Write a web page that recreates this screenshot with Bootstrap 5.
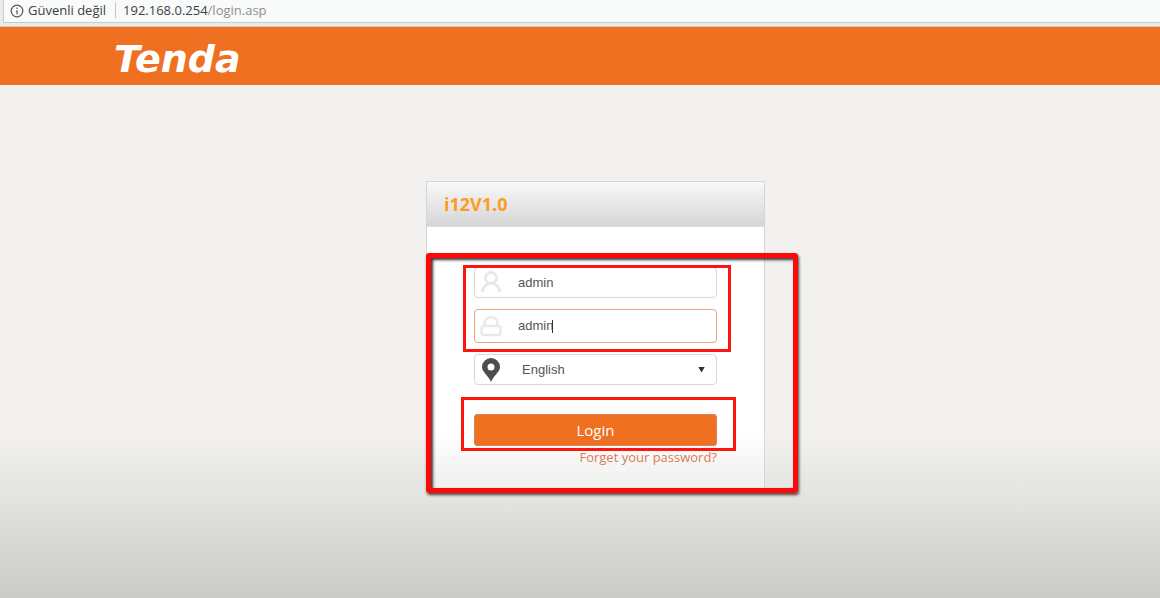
<!DOCTYPE html>
<html lang="en">
<head>
<meta charset="utf-8">
<meta name="viewport" content="width=device-width, initial-scale=1">
<title>Tenda login</title>
<link href="https://cdn.jsdelivr.net/npm/bootstrap@5.3.0/dist/css/bootstrap.min.css" rel="stylesheet">
<style>
  body { font-family: "Open Sans", "Noto Sans", sans-serif; background: #f2f1f0 linear-gradient(#f2f1f0 0, #f2f1f0 73%, #e2e2e0 84%, #cacac9 100%) no-repeat; }
  .address { height: 27px; background: #e9eaec; border-bottom: 1px solid #d9c8bd; padding-left: 3px; font-size: 13px; line-height: 20px; }
  .omnibox { height: 23px; background: #f9fafa; border: solid #c9cacc; border-width: 0 0 1px 1px; padding-left: 6px; color: #3e4144; }
  .divider { width: 1px; height: 16px; background: #c4c4c4; margin: 2px 7px 0 9px; }
  .path { color: #8d8d8d; }
  .brandbar { background: #f07022; height: 58px; padding-left: 114px; }
  .logo { font: italic bold 38px/64px "DejaVu Sans", sans-serif; color: #fff; text-decoration: none; }
  .logo:hover { color: #fff; }
  main { padding: 96px 0 0 31px; }
  .login-box { width: 339px; border: 1px solid #d6d6d6; border-bottom: 0; background: linear-gradient(#fff 80%, #efefee); }
  .title { height: 45px; background: linear-gradient(#f8f8f7, #d5d6d6); border-bottom: 1px solid #dfdfdf; padding-left: 17px; font-size: 18px; line-height: 44px; font-weight: 700; color: #fb9c26; }
  .login-form { padding: 40px 47px 24px; }
  .fields { display: grid; gap: 11px; margin-bottom: 11px; }
  .field { height: 31px; border: 1px solid #d8d8da; border-radius: 4px; background: #fff; }
  .field.active { height: 34px; border-color: #e9a57c; }
  .field svg { flex: none; margin-left: 4px; }
  .field input, .field select { font: 13px/20px "Liberation Sans", Arial, sans-serif; color: #555; border: 0; background: none; outline: 0; min-width: 0; padding: 0; }
  .field input { margin-left: 15px; }
  .field select { margin: 0 11px 0 19px; appearance: none; }
  .arrow { position: absolute; right: 11px; width: 7px; height: 6px; background: #333; clip-path: polygon(0 0, 100% 0, 50% 100%); pointer-events: none; }
  .caret { position: absolute; left: 77px; width: 1px; height: 13px; background: #333; }
  .submit { margin-top: 29px; }
  .btn-login { height: 32px; background: #f07022; border: 1px solid #dc8450; border-radius: 3px; color: #fff; font-size: 15px; line-height: 20px; padding: 0; }
  .btn-login:hover { background: #e4661a; color: #fff; }
  .forgot { font-size: 13px; color: #dc7951; text-decoration: none; }
  .forgot-row { line-height: 20px; }
  .outline { position: absolute; border: 3px solid #fb1410; pointer-events: none; }
  .outline-fields { inset: -2px -14px -9px -11px; }
  .outline-login { inset: -17px -19px -5px -13px; }
  .outline-form { inset: 71px -34px -2px -1px; border-width: 5px; border-color: #ff0808; border-radius: 3px; box-shadow: 1px 2px 3px #444, inset 2px 2px 3px #333; }
</style>
</head>
<body class="min-vh-100">
<div class="address">
  <div class="omnibox d-flex">
    <svg class="mt-1 me-1" width="14" height="14" viewBox="0 0 14 14" fill="none" stroke="#555" stroke-width="1.2" aria-hidden="true"><circle cx="7" cy="7" r="5.8"/><path d="M7 6v4.2M7 3.6v1.3"/></svg>
    <span>Güvenli değil</span><span class="divider"></span><span>192.168.0.254<span class="path">/login.asp</span></span>
  </div>
</div>
<header class="brandbar"><a class="logo d-inline-block" href="#">Tenda</a></header>
<main class="d-flex justify-content-center">
  <section class="login-box position-relative">
    <h1 class="title m-0">i12V1.0</h1>
    <form class="login-form">
      <div class="fields position-relative">
        <div class="field d-flex align-items-center">
          <svg width="24" height="24" viewBox="0 0 24 24" fill="none" stroke="#e8e8ec" stroke-width="3" aria-hidden="true"><circle cx="12" cy="7" r="5.5"/><path d="M3.500 21c0-5 3-7 6-8.500M20.500 21c0-5-3-7-6-8.500"/></svg>
          <input class="flex-fill" type="text" value="admin" aria-label="Username">
        </div>
        <div class="field active d-flex align-items-center position-relative">
          <svg width="24" height="24" viewBox="0 0 24 24" fill="none" stroke="#ebe8e8" stroke-width="2.500" aria-hidden="true"><path d="M5.500 12V9.500a6.500 6.500 0 0 1 13 0V12"/><rect x="2.500" y="12" width="19" height="9" rx="2"/></svg>
          <input class="flex-fill" type="text" value="admin" aria-label="Password">
          <span class="caret"></span>
        </div>
        <div class="outline outline-fields"></div>
      </div>
      <div class="field position-relative d-flex align-items-center">
        <svg width="24" height="26" viewBox="0 0 24 26" aria-hidden="true"><path fill="#4d4d4f" fill-rule="evenodd" d="M12 1a9 9 0 0 0-9 9c0 5 6 8 9 15 3-7 9-10 9-15a9 9 0 0 0-9-9zm0 5.500a3.500 3.500 0 1 1 0 7 3.500 3.500 0 0 1 0-7z"/></svg>
        <select class="flex-fill" aria-label="Language"><option>English</option></select>
        <span class="arrow"></span>
      </div>
      <div class="submit position-relative">
        <button class="btn btn-login w-100 d-block" type="submit">Login</button>
        <div class="outline outline-login"></div>
      </div>
      <div class="forgot-row text-end"><a class="forgot" href="#">Forget your password?</a></div>
    </form>
    <div class="outline outline-form"></div>
  </section>
</main>
<script src="https://cdn.jsdelivr.net/npm/bootstrap@5.3.0/dist/js/bootstrap.bundle.min.js"></script>
</body>
</html>
